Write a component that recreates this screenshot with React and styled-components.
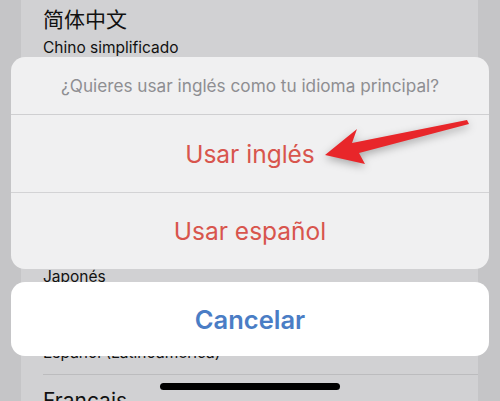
import styled, { createGlobalStyle } from "styled-components";

const GlobalStyle = createGlobalStyle`
  html, body {
    margin: 0;
    padding: 0;
    background: #c5c5c7;
    font-family: Inter, "Noto Sans", "Noto Sans CJK SC", sans-serif;
  }
`;

const Screen = styled.div`
  position: relative;
  width: 500px;
  height: 401px;
  overflow: hidden;
  background: #c5c5c7;
`;

const Panel = styled.div`
  margin: 0 22px 0 21px;
  height: 100%;
  background: #d1d1d3;
  overflow: hidden;
`;

const List = styled.div`
  margin-top: -6px;
`;

const Row = styled.div`
  height: 76px;
  box-sizing: border-box;
  margin-left: 22px;
  padding-top: 13px;
  border-top: ${(p) => (p.first ? "none" : "1px solid #bcbcbe")};
  display: flex;
  flex-direction: column;
  color: #111;
`;

const RowTitle = styled.div`
  font-size: 21px;
  line-height: 26px;
  font-family: Inter, "Noto Sans CJK SC", sans-serif;
`;

const RowSub = styled.div`
  margin-top: 2px;
  font-size: 15.5px;
  line-height: 26px;
`;

const Overlay = styled.div`
  position: absolute;
  inset: 0;
  padding: 57px 11px 0 11px;
  display: flex;
  flex-direction: column;
  gap: 13px;
`;

const Sheet = styled.div`
  background: #f0f0f1;
  border-radius: 14px;
  overflow: hidden;
  display: flex;
  flex-direction: column;
`;

const SheetTitle = styled.div`
  height: 57px;
  display: flex;
  align-items: center;
  justify-content: center;
  font-size: 17.2px;
  color: #8e8e92;
  border-bottom: 1px solid #cfcfd1;
`;

const Action = styled.div`
  height: ${(p) => p.h}px;
  display: flex;
  align-items: center;
  justify-content: center;
  font-size: 24.5px;
  color: ${(p) => p.color || "#d8554d"};
  border-bottom: ${(p) => (p.last ? "none" : "1px solid #d3d3d5")};
`;

const Cancel = styled.div`
  height: 74px;
  background: #ffffff;
  border-radius: 14px;
  display: flex;
  align-items: center;
  justify-content: center;
  font-size: 25.5px;
  font-weight: 600;
  color: #4a7dc5;
`;

const Arrow = styled.svg`
  position: absolute;
  left: 316px;
  top: 112px;
  filter: drop-shadow(0 3px 4px rgba(0, 0, 0, 0.3));
`;

const HomeBar = styled.div`
  position: absolute;
  left: 160px;
  top: 383px;
  width: 180px;
  height: 7px;
  border-radius: 4px;
  background: #000;
`;

const rows = [
  ["简体中文", "Chino simplificado"],
  ["繁體中文", "Chino tradicional"],
  ["English (UK)", "Inglés (Reino Unido)"],
  ["日本語", "Japonés"],
  ["Español (Latinoamérica)", "Español (Latinoamérica)"],
  ["Français", "Francés"],
];

export default function App() {
  return (
    <Screen>
      <GlobalStyle />
      <Panel>
        <List>
          {rows.map(([t, s], i) => (
            <Row key={t} first={i === 0}>
              <RowTitle>{t}</RowTitle>
              <RowSub>{s}</RowSub>
            </Row>
          ))}
        </List>
      </Panel>
      <Overlay>
        <Sheet>
          <SheetTitle>¿Quieres usar inglés como tu idioma principal?</SheetTitle>
          <Action h={77}>Usar inglés</Action>
          <Action h={76} last>
            Usar español
          </Action>
        </Sheet>
        <Cancel>Cancelar</Cancel>
      </Overlay>
      <Arrow width="160" height="60" viewBox="316 112 160 60">
        <polygon
          points="325,155 357,129 352,143 467,120 469,124 359,153 365,164"
          fill="#e8262a"
        />
      </Arrow>
      <HomeBar />
    </Screen>
  );
}
